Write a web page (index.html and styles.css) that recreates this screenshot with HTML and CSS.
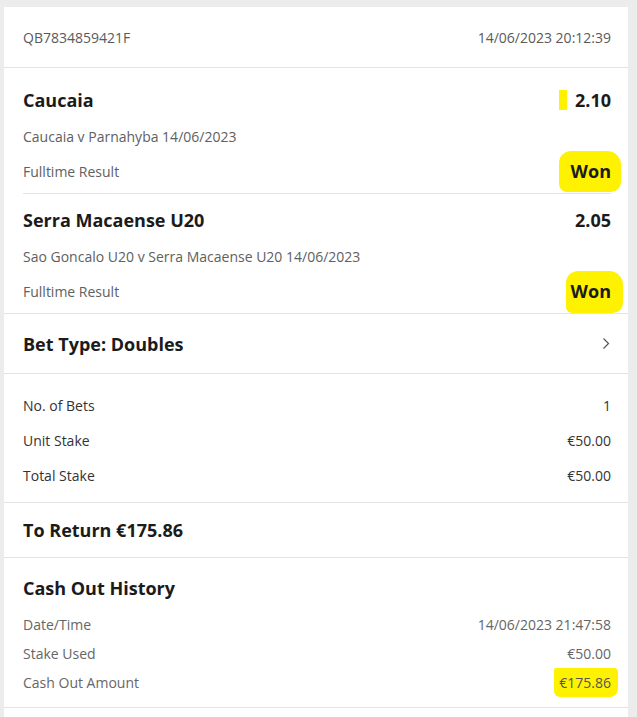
FILE: index.html
```html
<!DOCTYPE html>
<html lang="en">
<head>
<meta charset="utf-8">
<title>Bet receipt</title>
<link rel="stylesheet" href="styles.css">
</head>
<body>
<div class="card">
  <div class="head">
    <span class="ref">QB7834859421F</span>
    <span class="ref">14/06/2023 20:12:39</span>
  </div>

  <div class="sels">
    <div class="sel">
      <div class="row title-row">
        <span class="title">Caucaia</span>
        <span class="odds"><span class="mark"></span>2.10</span>
      </div>
      <div class="event">Caucaia v Parnahyba 14/06/2023</div>
      <div class="row market-row">
        <span class="market">Fulltime Result</span>
        <span class="result"><span class="hl hl-won1">Won</span></span>
      </div>
    </div>
    <div class="sel">
      <div class="row title-row">
        <span class="title">Serra Macaense U20</span>
        <span class="odds">2.05</span>
      </div>
      <div class="event">Sao Goncalo U20 v Serra Macaense U20 14/06/2023</div>
      <div class="row market-row">
        <span class="market">Fulltime Result</span>
        <span class="result"><span class="hl hl-won2">Won</span></span>
      </div>
    </div>
  </div>

  <div class="section bettype">
    <span class="title">Bet Type: Doubles</span>
    <svg class="chev" width="8" height="13" viewBox="0 0 8 13"><path d="M1.5 1.5 L6.5 6.5 L1.5 11.5" fill="none" stroke="#555" stroke-width="1.2"/></svg>
  </div>

  <div class="section stakes">
    <div class="row line"><span>No. of Bets</span><span>1</span></div>
    <div class="row line"><span>Unit Stake</span><span>€50.00</span></div>
    <div class="row line"><span>Total Stake</span><span>€50.00</span></div>
  </div>

  <div class="section toreturn">
    <span class="title">To Return €175.86</span>
  </div>

  <div class="section cashout">
    <div class="title co-title">Cash Out History</div>
    <div class="row line2"><span>Date/Time</span><span>14/06/2023 21:47:58</span></div>
    <div class="row line2"><span>Stake Used</span><span>€50.00</span></div>
    <div class="row line2"><span>Cash Out Amount</span><span class="hl hl-amt">€175.86</span></div>
  </div>

  <div class="tail"></div>
</div>
</body>
</html>
```

FILE: styles.css
```css
html, body {
  margin: 0;
  padding: 0;
  background: #ececec;
}
body {
  font-family: "Open Sans", "Noto Sans", "Liberation Sans", sans-serif;
  color: #1b1b1b;
  padding: 7px 9px 0 4px;
}
.card {
  background: #fff;
  min-height: 720px;
}
.head {
  height: 60px;
  display: flex;
  justify-content: space-between;
  align-items: center;
  padding: 0 17px 0 19px;
  border-bottom: 1px solid #e4e4e4;
}
.ref {
  font-size: 14px;
  color: #5a5a5a;
}
.row {
  display: flex;
  justify-content: space-between;
  align-items: center;
}
.sels {
  padding: 6px 17px 0 19px;
  border-bottom: 1px solid #e4e4e4;
}
.sel {
  padding: 13px 0 11px;
}
.sel + .sel {
  border-top: 1px solid #e4e4e4;
}
.title {
  font-size: 18px;
  font-weight: 700;
  color: #1b1b1b;
}
.title-row {
  height: 26px;
}
.odds {
  font-size: 18px;
  font-weight: 700;
  display: flex;
  align-items: center;
}
.mark {
  display: inline-block;
  width: 8px;
  height: 20px;
  background: #fff200;
  margin-right: 8px;
}
.event {
  margin-top: 13px;
  height: 22px;
  line-height: 22px;
  font-size: 14px;
  color: #606060;
}
.market-row {
  margin-top: 12px;
  height: 22px;
}
.market {
  font-size: 14px;
  color: #606060;
}
.result {
  font-size: 18px;
  font-weight: 700;
}
.hl {
  background: #fff200;
  display: inline-block;
}
.hl-won1 {
  padding: 8px 10px 9px 12px;
  margin: -8px -10px -9px -12px;
  border-radius: 12px 14px 10px 8px;
}
.hl-won2 {
  padding: 8px 12px 10px 5px;
  margin: -8px -12px -10px -5px;
  border-radius: 12px 14px 10px 6px;
}
.section {
  padding: 0 17px 0 19px;
  border-bottom: 1px solid #e4e4e4;
}
.bettype {
  height: 59px;
  display: flex;
  justify-content: space-between;
  align-items: center;
}
.chev {
  display: block;
  margin-right: 1px;
}
.stakes {
  padding-top: 14px;
  padding-bottom: 9px;
}
.line {
  height: 35px;
  font-size: 14px;
  color: #333;
}
.toreturn {
  height: 54px;
  display: flex;
  align-items: center;
}
.cashout {
  padding-top: 17px;
  padding-bottom: 10px;
}
.co-title {
  line-height: 26px;
  margin-bottom: 9px;
}
.line2 {
  height: 29px;
  font-size: 14px;
  color: #666;
}
.hl-amt {
  padding: 5px 7px 5px 5px;
  margin: -5px -7px -5px -5px;
  border-radius: 2px 4px 8px 6px;
  color: #555;
}
.tail {
  height: 20px;
}
```
